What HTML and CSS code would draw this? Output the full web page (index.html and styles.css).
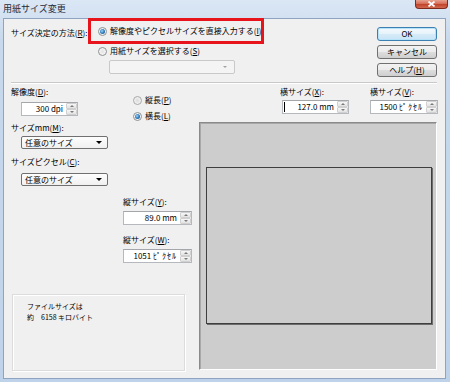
FILE: index.html
```html
<!DOCTYPE html>
<html lang="ja">
<head>
    <meta charset="UTF-8">
    <meta name="viewport" content="width=device-width, initial-scale=1.0">
    <title>用紙サイズ変更</title>
    <link rel="stylesheet" href="styles.css">
</head>
<body>
    <div class="window">
        <div class="titlebar">
            <span class="title">用紙サイズ変更</span>
            <span class="close">
                <svg width="9" height="6" viewBox="0 0 9 6"><path d="M1.5 0.5 L7.5 5.5 M7.5 0.5 L1.5 5.5" stroke="#fff" stroke-width="1.7" fill="none"/></svg>
            </span>
        </div>
        <div class="client">
            <div class="top">
                <div class="method-label">サイズ決定の方法(<u>R</u>):</div>
                <div class="method-options">
                    <div class="option highlight"><span class="radio checked"></span>解像度やピクセルサイズを直接入力する(<u>I</u>)</div>
                    <div class="option second"><span class="radio"></span>用紙サイズを選択する(<u>S</u>)</div>
                    <div class="combo disabled"><span class="combo-text"></span><span class="arrow"></span></div>
                </div>
                <div class="buttons">
                    <button class="btn default">OK</button>
                    <button class="btn">キャンセル</button>
                    <button class="btn">ヘルプ(<u>H</u>)</button>
                </div>
            </div>
            <div class="separator"></div>
            <div class="bottom">
                <div class="left">
                    <div class="left-cols">
                        <div class="col-a">
                            <div class="label l-res">解像度(<u>D</u>):</div>
                            <div class="spin s-res">
                                <span class="spin-value">300 dpi</span>
                                <span class="spin-buttons"><span class="spin-btn up"></span><span class="spin-btn down"></span></span>
                            </div>
                            <div class="label l-mm">サイズmm(<u>M</u>):</div>
                            <div class="combo c-mm"><span class="combo-text">任意のサイズ</span><span class="arrow"></span></div>
                            <div class="label l-px">サイズピクセル(<u>C</u>):</div>
                            <div class="combo c-px"><span class="combo-text">任意のサイズ</span><span class="arrow"></span></div>
                        </div>
                        <div class="col-b">
                            <div class="option o-portrait"><span class="radio"></span>縦長(<u>P</u>)</div>
                            <div class="option o-landscape"><span class="radio checked"></span>横長(<u>L</u>)</div>
                            <div class="label l-vy">縦サイズ(<u>Y</u>):</div>
                            <div class="spin s-v">
                                <span class="spin-value">89.0 mm</span>
                                <span class="spin-buttons"><span class="spin-btn up"></span><span class="spin-btn down"></span></span>
                            </div>
                            <div class="label l-vw">縦サイズ(<u>W</u>):</div>
                            <div class="spin s-v">
                                <span class="spin-value">1051&nbsp;<span class="kana">ﾋﾟｸｾﾙ</span></span>
                                <span class="spin-buttons"><span class="spin-btn up"></span><span class="spin-btn down"></span></span>
                            </div>
                        </div>
                    </div>
                    <div class="filesize">
                        <div>ファイルサイズは</div>
                        <div>約　6158 キロバイト</div>
                    </div>
                </div>
                <div class="right">
                    <div class="h-sizes">
                        <div class="field f-x">
                            <div class="label">横サイズ(<u>X</u>):</div>
                            <div class="spin s-x">
                                <span class="spin-value"><span class="caret"></span>127.0 mm</span>
                                <span class="spin-buttons"><span class="spin-btn up"></span><span class="spin-btn down"></span></span>
                            </div>
                        </div>
                        <div class="field f-v">
                            <div class="label">横サイズ(<u>V</u>):</div>
                            <div class="spin s-hv">
                                <span class="spin-value">1500&nbsp;<span class="kana">ﾋﾟｸｾﾙ</span></span>
                                <span class="spin-buttons"><span class="spin-btn up"></span><span class="spin-btn down"></span></span>
                            </div>
                        </div>
                    </div>
                    <div class="preview">
                        <div class="paper"></div>
                    </div>
                </div>
            </div>
        </div>
    </div>
</body>
</html>
```

FILE: styles.css
```css
html, body {
    margin: 0;
    padding: 0;
}
body {
    width: 450px;
    height: 382px;
    overflow: hidden;
    font-family: "Noto Sans CJK JP", "Noto Sans", sans-serif;
    font-size: 8px;
    color: #000;
}
u {
    text-decoration: underline;
}
.window {
    width: 450px;
    height: 382px;
    box-sizing: border-box;
    background: linear-gradient(to bottom, #dbe7f5 0px, #c8d9ed 40px, #bed3ea 100%);
    display: flex;
    flex-direction: column;
}
.titlebar {
    height: 18px;
    display: flex;
    align-items: flex-start;
}
.title {
    font-size: 9px;
    line-height: 18px;
    padding-left: 3px;
    color: #1e2a3a;
}
.close {
    margin-left: auto;
    margin-right: 2px;
    width: 33px;
    height: 9px;
    box-sizing: border-box;
    border: 1px solid #7e2a1c;
    border-top: none;
    border-radius: 0 0 4px 4px;
    background: linear-gradient(to bottom, #e8a08f 0%, #d5705a 45%, #c2432a 55%, #d06a4f 100%);
    display: flex;
    align-items: center;
    justify-content: center;
}
.close svg {
    display: block;
}
.client {
    margin: 0 4px 3px 3px;
    height: 361px;
    box-sizing: border-box;
    border: 1px solid #8ea4c0;
    background: #f0f0f0;
    display: flex;
    flex-direction: column;
}

/* top part */
.top {
    height: 63px;
    display: flex;
    padding: 0 8px 0 7px;
}
.method-label {
    width: 77px;
    margin-top: 8px;
    line-height: 12px;
    white-space: nowrap;
}
.method-options {
    display: flex;
    flex-direction: column;
}
.option {
    display: flex;
    align-items: center;
    height: 12px;
    line-height: 12px;
    white-space: nowrap;
}
.option .radio {
    margin-right: 3px;
}
.highlight {
    width: 176px;
    height: 26px;
    box-sizing: border-box;
    margin-top: -1px;
    border: 3px solid #e8141b;
    padding-left: 7px;
}
.second {
    margin-top: 1px;
    padding-left: 10px;
}
.radio {
    width: 9px;
    height: 9px;
    box-sizing: border-box;
    border-radius: 50%;
    border: 1px solid #8e9090;
    background: radial-gradient(circle, #e2e2e2 0%, #f6f6f6 70%);
    display: flex;
    align-items: center;
    justify-content: center;
    flex-shrink: 0;
}
.radio.checked::after {
    content: "";
    width: 5px;
    height: 5px;
    border-radius: 50%;
    background: radial-gradient(circle at 40% 40%, #a6d7f5 0%, #2f7cc0 50%, #164d80 100%);
}
.combo {
    display: flex;
    align-items: center;
    box-sizing: border-box;
    border: 1px solid #707070;
    border-radius: 2px;
    background: linear-gradient(to bottom, #fdfdfd, #f0f0f0);
    line-height: 11px;
}
.combo-text {
    flex: 1;
    padding-left: 3px;
    white-space: nowrap;
}
.arrow {
    width: 0;
    height: 0;
    border-left: 3px solid transparent;
    border-right: 3px solid transparent;
    border-top: 3px solid #000;
    margin-right: 5px;
}
.combo.disabled {
    margin: 3px 0 0 21px;
    width: 126px;
    height: 14px;
    border-color: #c9c9c9;
    background: #f4f4f4;
}
.combo.disabled .arrow {
    border-top-color: #a3a3a3;
    border-left-width: 2.5px;
    border-right-width: 2.5px;
    border-top-width: 2.5px;
    margin-right: 7px;
}
.buttons {
    margin-left: auto;
    margin-top: 8px;
    width: 60px;
    display: flex;
    flex-direction: column;
    gap: 4px;
}
.btn {
    height: 14px;
    padding: 0;
    font-family: inherit;
    font-size: 8px;
    line-height: 12px;
    color: #000;
    border: 1px solid #707070;
    border-radius: 3px;
    background: linear-gradient(to bottom, #f2f2f2 0%, #ebebeb 50%, #dddddd 51%, #cfcfcf 100%);
}
.btn.default {
    border-color: #3c7fb1;
    box-shadow: inset 0 0 0 1px #b6e3f8;
    background: linear-gradient(to bottom, #f4f9fd 0%, #e6f2fa 50%, #d6ebf8 51%, #c8e4f6 100%);
}
.separator {
    margin: 0 8px 0 7px;
    border-top: 1px solid #c9c9c9;
    border-bottom: 1px solid #fff;
    height: 0;
}

/* bottom part */
.bottom {
    flex: 1;
    display: flex;
    padding: 0 7px 7px 7px;
}
.left {
    width: 188px;
    display: flex;
    flex-direction: column;
}
.left-cols {
    display: flex;
}
.col-a {
    width: 112px;
    display: flex;
    flex-direction: column;
    align-items: flex-start;
}
.col-b {
    width: 76px;
    display: flex;
    flex-direction: column;
    align-items: flex-start;
}
.label {
    line-height: 12px;
    height: 12px;
    white-space: nowrap;
}
.l-res {
    margin-top: 2px;
}
.s-res {
    margin: 4px 0 0 10px;
    width: 57px;
}
.l-mm {
    margin-top: 6px;
}
.c-mm {
    margin: 2px 0 0 10px;
    width: 87px;
    height: 13px;
}
.l-px {
    margin-top: 7px;
}
.c-px {
    margin: 5px 0 0 10px;
    width: 87px;
    height: 13px;
}
.o-portrait {
    margin-top: 10px;
    padding-left: 10px;
}
.o-landscape {
    margin-top: 4px;
    padding-left: 10px;
}
.o-portrait .radio {
    background: radial-gradient(circle, #dcdcdc 0%, #f2f2f2 70%);
    border-color: #a8a8a8;
}
.l-vy {
    margin-top: 74px;
}
.l-vw {
    margin-top: 9px;
}
.s-v {
    margin-top: 3px;
    width: 69px;
}
.spin {
    display: flex;
    height: 14px;
    box-sizing: border-box;
    border: 1px solid #b5b8bd;
    border-top-color: #a3a6ab;
    background: #fff;
}
.spin-value {
    flex: 1;
    text-align: right;
    padding-right: 3px;
    line-height: 12px;
    white-space: nowrap;
    display: flex;
    align-items: center;
    justify-content: flex-end;
}
.kana {
    letter-spacing: 1px;
}
.caret {
    width: 1px;
    height: 10px;
    background: #000;
    margin-right: auto;
    margin-left: 1px;
}
.spin-buttons {
    width: 11px;
    display: flex;
    flex-direction: column;
}
.spin-btn {
    flex: 1;
    box-sizing: border-box;
    border: 1px solid #d0d0d0;
    border-radius: 1px;
    background: linear-gradient(to bottom, #f7f7f7, #e2e2e2);
    display: flex;
    align-items: center;
    justify-content: center;
}
.spin-btn::after {
    content: "";
    width: 0;
    height: 0;
    border-left: 2px solid transparent;
    border-right: 2px solid transparent;
}
.spin-btn.up::after {
    border-bottom: 2px solid #7a7a7a;
}
.spin-btn.down::after {
    border-top: 2px solid #7a7a7a;
}
.filesize {
    margin-top: auto;
    margin-left: 1px;
    width: 173px;
    height: 77px;
    box-sizing: border-box;
    border: 1px solid #dcdcdc;
    box-shadow: inset 1px 1px 0 #fff, 1px 1px 0 #fff;
    padding: 6px 0 0 14px;
    font-size: 7px;
    line-height: 11px;
}
.right {
    width: 239px;
    display: flex;
    flex-direction: column;
}
.h-sizes {
    display: flex;
    justify-content: flex-end;
    gap: 21px;
}
.field {
    display: flex;
    flex-direction: column;
    align-items: flex-start;
}
.field .label {
    margin-top: 2px;
}
.s-x {
    margin: 2px 0 0 2px;
    width: 67px;
}
.s-hv {
    margin-top: 2px;
    width: 68px;
}
.preview {
    margin-top: 8px;
    margin-bottom: 1px;
    width: 238px;
    height: 248px;
    box-sizing: border-box;
    border: 1px solid;
    border-color: #8a8a8a #ffffff #ffffff #8a8a8a;
    box-shadow: inset 1px 1px 0 #a8a8a8;
    background: #cdcdcd;
    padding: 44px 0 0 6px;
}
.paper {
    width: 226px;
    height: 157px;
    box-sizing: border-box;
    border: 1px solid #3e3e3e;
    box-shadow: 1px 1px 0 #6c6c6c;
    background: #cdcdcd;
}
```
